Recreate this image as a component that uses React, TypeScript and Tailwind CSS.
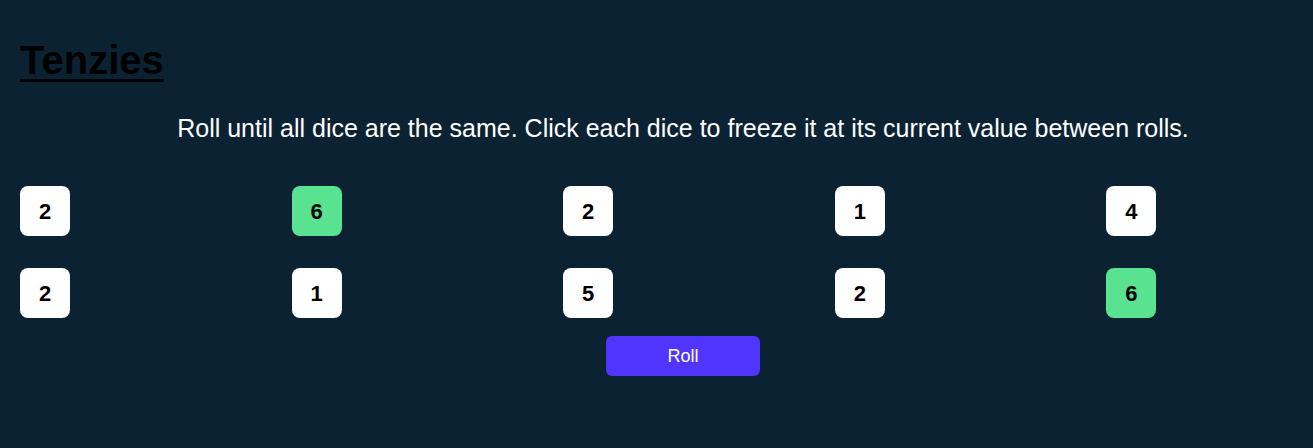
const dice = [
  { value: 2, held: false },
  { value: 6, held: true },
  { value: 2, held: false },
  { value: 1, held: false },
  { value: 4, held: false },
  { value: 2, held: false },
  { value: 1, held: false },
  { value: 5, held: false },
  { value: 2, held: false },
  { value: 6, held: true },
];

export default function App() {
  return (
    <div className="h-[448px] overflow-hidden bg-[#0b2233] font-['Liberation_Sans',Arial,sans-serif]">
      <main className="w-[1326px] ml-5 pt-[37px]">
        <h1 className="text-[40px] leading-[46px] font-bold text-black underline underline-offset-[5px] decoration-[3px]">
          Tenzies
        </h1>
        <p className="mt-[31px] text-center text-[25px] leading-[29px] text-white">
          Roll until all dice are the same. Click each dice to freeze it at its current value between rolls.
        </p>
        <div className="mt-[43px] grid grid-cols-5 gap-8">
          {dice.map((d, i) => (
            <button
              key={i}
              className={`w-[50px] h-[50px] rounded-lg text-[22px] font-bold text-black ${
                d.held ? "bg-[#59e391]" : "bg-white"
              }`}
            >
              {d.value}
            </button>
          ))}
        </div>
        <div className="mt-[18px] flex justify-center">
          <button className="w-[154px] h-10 rounded-md bg-[#5035ff] text-white text-[18px]">
            Roll
          </button>
        </div>
      </main>
    </div>
  );
}
